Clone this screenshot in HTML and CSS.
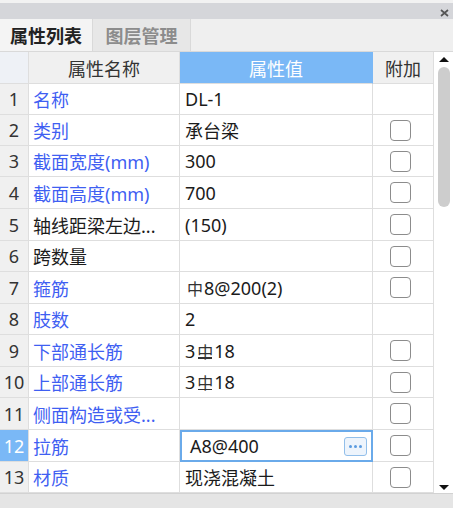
FILE: index.html
```html
<!DOCTYPE html>
<html>
<head>
<meta charset="utf-8">
<link rel="stylesheet" href="styles.css">
</head>
<body>
<div class="panel">
  <div class="titlebar">
    <svg class="close" width="9" height="8" viewBox="0 0 9 8"><path d="M1 1 L8 7 M8 1 L1 7" stroke="#555" stroke-width="1.7" fill="none"/></svg>
  </div>
  <div class="tabs">
    <div class="tab active">属性列表</div>
    <div class="tab inactive">图层管理</div>
  </div>
  <div class="body">
    <div class="grid">
      <div class="h hnum"></div>
      <div class="h">属性名称</div>
      <div class="h hsel">属性值</div>
      <div class="h">附加</div>

      <div class="num">1</div><div class="name">名称</div><div class="val">DL-1</div><div class="ck"></div>
      <div class="num">2</div><div class="name">类别</div><div class="val">承台梁</div><div class="ck"><span class="box"></span></div>
      <div class="num">3</div><div class="name">截面宽度(mm)</div><div class="val">300</div><div class="ck"><span class="box"></span></div>
      <div class="num">4</div><div class="name">截面高度(mm)</div><div class="val">700</div><div class="ck"><span class="box"></span></div>
      <div class="num">5</div><div class="name black">轴线距梁左边...</div><div class="val">(150)</div><div class="ck"><span class="box"></span></div>
      <div class="num">6</div><div class="name black">跨数量</div><div class="val"></div><div class="ck"><span class="box"></span></div>
      <div class="num">7</div><div class="name">箍筋</div><div class="val"><span class="sym">中</span>8@200(2)</div><div class="ck"><span class="box"></span></div>
      <div class="num">8</div><div class="name">肢数</div><div class="val">2</div><div class="ck"></div>
      <div class="num">9</div><div class="name">下部通长筋</div><div class="val">3<span class="sym bar">中</span>18</div><div class="ck"><span class="box"></span></div>
      <div class="num">10</div><div class="name">上部通长筋</div><div class="val">3<span class="sym bar">中</span>18</div><div class="ck"><span class="box"></span></div>
      <div class="num">11</div><div class="name">侧面构造或受...</div><div class="val"></div><div class="ck"><span class="box"></span></div>
      <div class="num sel">12</div><div class="name">拉筋</div><div class="val edit"><span class="etext">A8@400</span><span class="more"><i></i><i></i><i></i></span></div><div class="ck"><span class="box"></span></div>
      <div class="num">13</div><div class="name">材质</div><div class="val">现浇混凝土</div><div class="ck"><span class="box"></span></div>
    </div>
    <div class="scroll">
      <span class="arrow up"></span>
      <span class="thumb"></span>
      <span class="spacer"></span>
      <span class="arrow down"></span>
    </div>
  </div>
  <div class="footer"></div>
</div>
</body>
</html>
```
FILE: styles.css
```css
* { box-sizing: border-box; }
html, body { margin: 0; padding: 0; }
body {
  width: 453px;
  height: 508px;
  background: #efefef;
  font-family: "Noto Sans", "Noto Sans CJK SC", sans-serif;
  font-size: 18px;
  color: #1b1b1b;
  overflow: hidden;
}
.panel {
  display: flex;
  flex-direction: column;
  width: 453px;
  height: 508px;
}
.titlebar {
  height: 19px;
  border-top: 3px solid #f2f2f2;
  background: #d5d6da;
  display: flex;
  justify-content: flex-end;
  align-items: center;
  padding-right: 4px;
}
.close { display: block; margin-top: 3px; }
.tabs {
  height: 33px;
  display: flex;
  background: #efefef;
  border-bottom: 1px solid #d9d9d9;
}
.tab {
  display: flex;
  align-items: center;
  justify-content: center;
  font-family: "Noto Sans CJK SC", sans-serif;
  font-weight: 700;
  border-right: 1px solid #d9d9d9;
}
.tab.active {
  width: 93px;
  background: #f4f4f4;
  color: #222;
}
.tab.inactive {
  width: 98px;
  background: #e7e7e7;
  color: #8c8c8c;
}
.body {
  display: flex;
  height: 441px;
  background: #fff;
}
.grid {
  width: 434px;
  display: grid;
  grid-template-columns: 29px 151px 193px 61px;
  grid-template-rows: 32px 31px 31px 31px 32px 32px 31px 32px 31px 32px 31px 32px 32px 31px;
}
.grid > div {
  border-right: 1px solid #dedede;
  border-bottom: 1px solid #dedede;
  display: flex;
  align-items: center;
  white-space: nowrap;
  overflow: hidden;
}
.h {
  justify-content: center;
  background: #f0f0f0;
  color: #333;
}
.hnum { background: #eef1f6; }
.h.hsel { background: #7ab8f6; color: #fff; border-right-color: #7ab8f6; }
.num {
  background: #f0f0f0;
  justify-content: center;
  color: #333;
}
.num.sel { background: #7ab8f6; color: #fff; }
.name {
  padding-left: 4px;
  color: #3f5ff2;
}
.name.black { color: #1b1b1b; }
.val { padding-left: 5px; }
.sym {
  font-family: "Noto Sans CJK SC", sans-serif;
  font-size: 16px;
  color: #333;
  margin: 0 1px 0 2px;
  position: relative;
  display: inline-block;
  line-height: 16px;
}
.sym.bar::after {
  content: "";
  position: absolute;
  left: 1px;
  right: 1px;
  bottom: 0;
  height: 1.5px;
  background: #333;
}
.val.edit {
  border: 2px solid #6aaaea !important;
  padding-left: 8px;
  justify-content: space-between;
  padding-right: 4px;
}
.more {
  width: 23px;
  height: 19px;
  border: 1px solid #92bfea;
  border-radius: 3px;
  background: #edf4fc;
  display: flex;
  align-items: center;
  justify-content: center;
  gap: 2px;
}
.more i {
  width: 3px;
  height: 3px;
  border-radius: 50%;
  background: #5b9be0;
}
.ck { justify-content: center; padding-right: 5px; }
.box {
  width: 21px;
  height: 21px;
  border: 1.5px solid #8c8c8c;
  border-radius: 4px;
  background: #fff;
}
.scroll {
  width: 19px;
  display: flex;
  flex-direction: column;
  align-items: center;
  background: #fff;
  padding-left: 1px;
}
.arrow {
  width: 0;
  height: 0;
  border-left: 5px solid transparent;
  border-right: 5px solid transparent;
}
.arrow.up { border-bottom: 5px solid #111; margin-top: 5px; }
.arrow.down { border-top: 5px solid #111; margin-bottom: 3px; }
.thumb {
  width: 12px;
  height: 140px;
  margin-top: 5px;
  border-radius: 6px;
  background: #cdcdcd;
}
.spacer { flex: 1; }
.footer {
  flex: 1;
  background: #e5e5e5;
  border-top: 1px solid #d2d2d2;
}
```
